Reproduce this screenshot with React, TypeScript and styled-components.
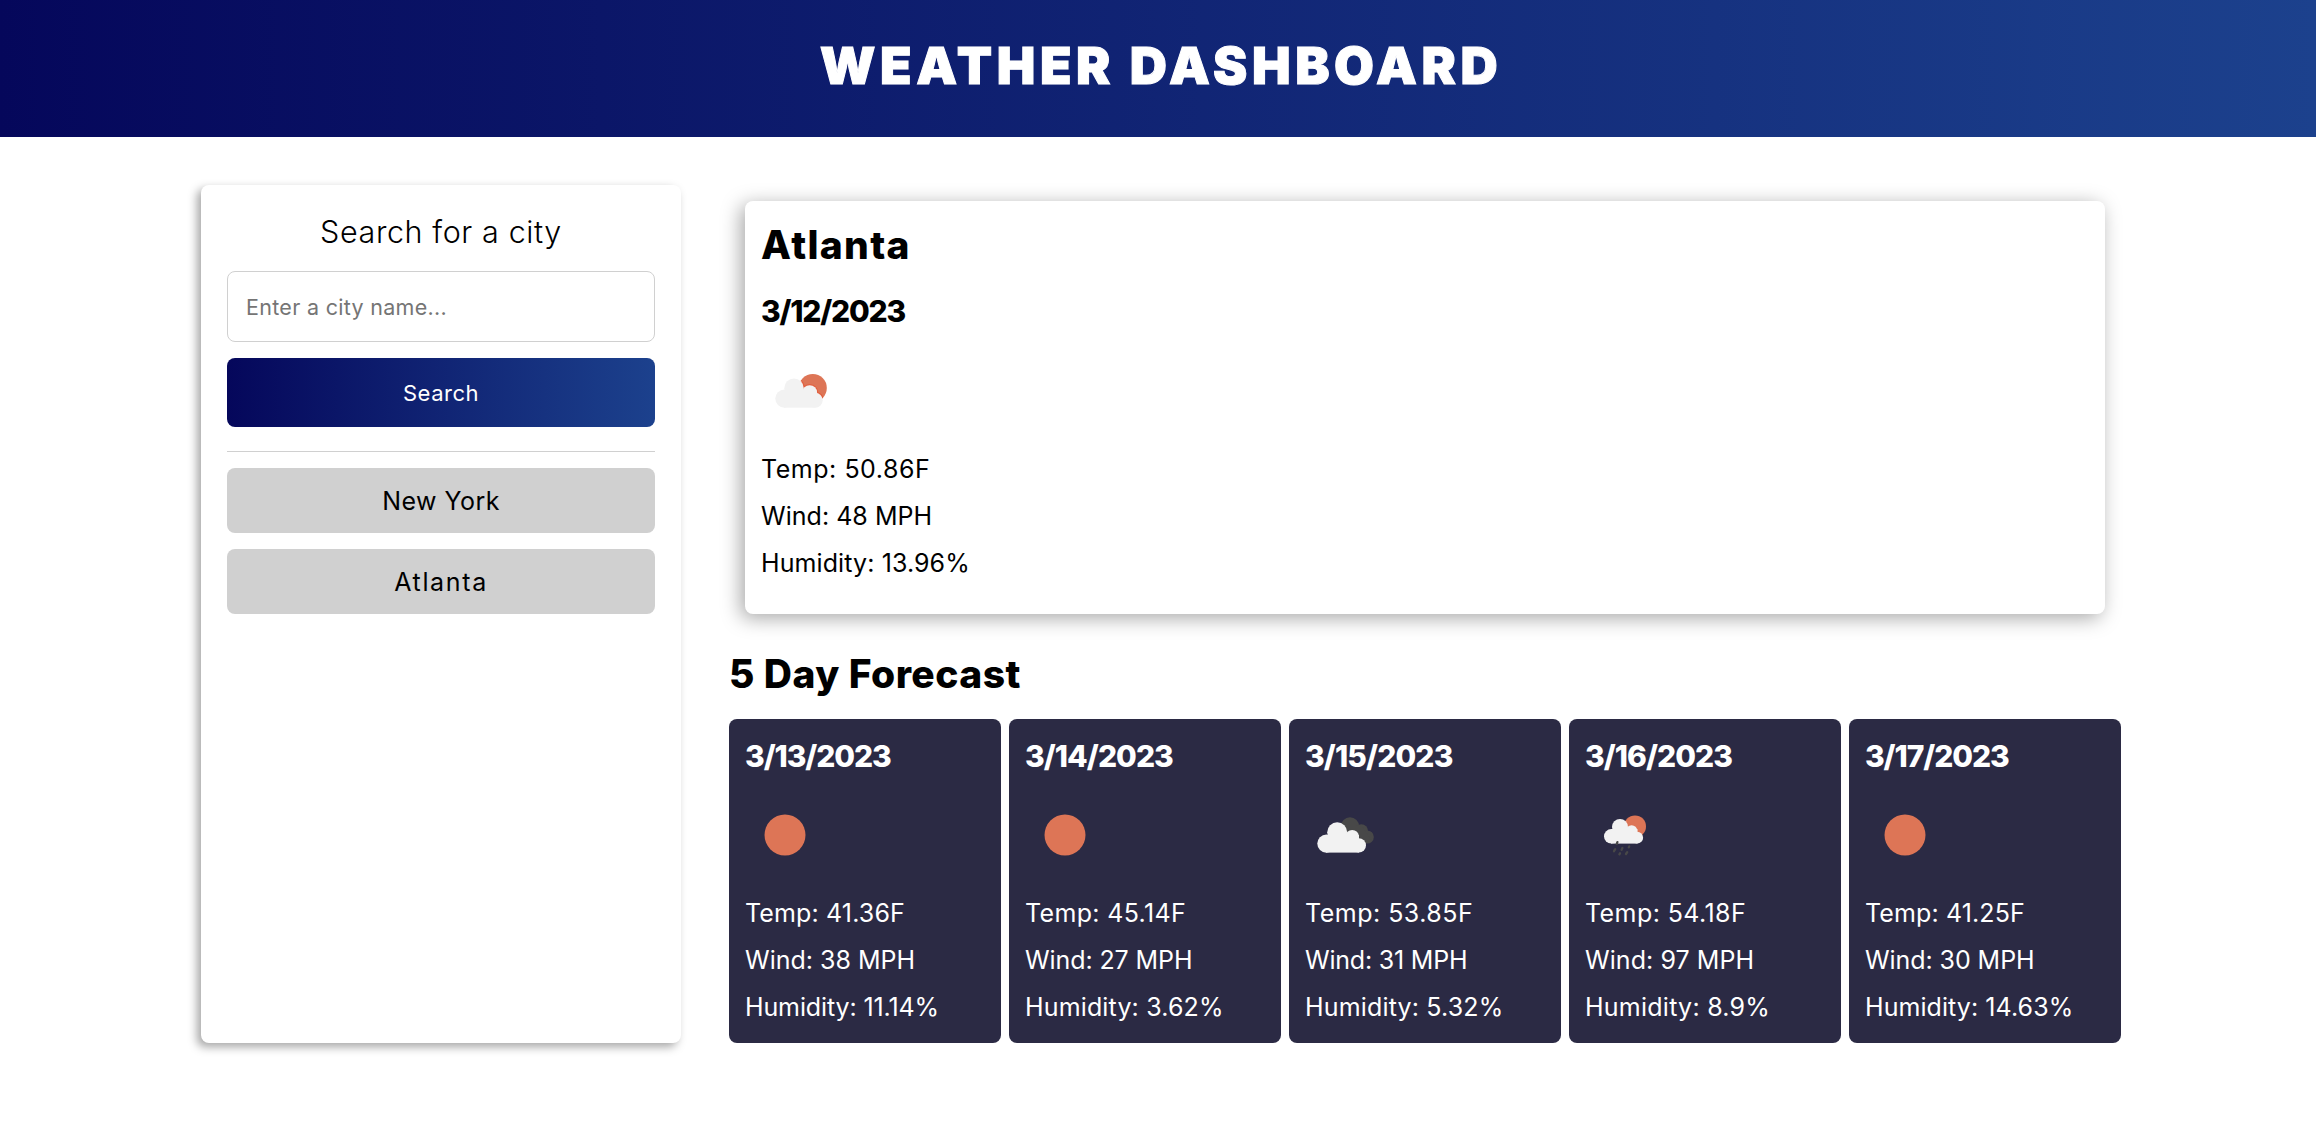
import React from "react";
import styled, { createGlobalStyle } from "styled-components";

const GlobalStyle = createGlobalStyle`
  * { box-sizing: border-box; margin: 0; padding: 0; }
  body { min-height: 1144px; background: #fff; color: #000; font-family: Inter, "Liberation Sans", sans-serif; }
`;

const Header = styled.header`
  display: flex;
  align-items: center;
  justify-content: center;
  height: 137px;
  padding: 0 0 8px 6px;
  background: linear-gradient(90deg, #05075b, #1c418d);
`;

const Title = styled.h1`
  color: #fff;
  font-size: 51.5px;
  font-weight: 900;
  line-height: 78px;
  letter-spacing: 4.55px;
  white-space: nowrap;
  -webkit-text-stroke: 1px #fff;
`;

const Layout = styled.main`
  display: flex;
  align-items: stretch;
  gap: 48px;
  width: 1920px;
  height: 858px;
  margin: 48px 0 0 201px;
`;

const Sidebar = styled.aside`
  display: flex;
  flex-direction: column;
  flex: 0 0 480px;
  padding: 23px 26px;
  border-radius: 8px;
  background: #fff;
  box-shadow: -4px 4px 10px rgba(0, 0, 0, 0.35);
`;

const SearchLabel = styled.label`
  margin-bottom: 15px;
  font-size: 30.5px;
  font-weight: 300;
  line-height: 48px;
  letter-spacing: 0.6px;
  text-align: center;
`;

const CityInput = styled.input`
  height: 71px;
  padding: 0 18px;
  border: 1px solid #d0d0d0;
  border-radius: 8px;
  background: #fff;
  font-family: inherit;
  font-size: 21.5px;
  letter-spacing: 0.3px;
  outline: none;
  &::placeholder { color: #757575; opacity: 1; }
`;

const SearchButton = styled.button`
  height: 69px;
  margin-top: 16px;
  border: 0;
  border-radius: 8px;
  background: linear-gradient(90deg, #05075b, #1c418d);
  color: #fff;
  font-family: inherit;
  font-size: 22px;
  letter-spacing: 0.5px;
`;

const Divider = styled.hr`
  height: 1px;
  margin: 24px 0 16px;
  border: 0;
  background: #d0d0d0;
`;

const History = styled.div`
  display: flex;
  flex-direction: column;
  gap: 16px;
`;

const HistoryItem = styled.button<{ $spacing: number }>`
  height: 65px;
  border: 0;
  border-radius: 8px;
  background: #d0d0d0;
  color: #000;
  font-family: inherit;
  font-size: 25px;
  letter-spacing: ${(p) => p.$spacing}px;
`;

const Content = styled.section`
  display: flex;
  flex-direction: column;
  flex: 1;
`;

const CurrentCard = styled.article`
  height: 413px;
  margin: 16px 16px 0;
  padding: 14px 16px;
  border-radius: 8px;
  background: #fff;
  box-shadow: -4px 4px 20px rgba(0, 0, 0, 0.35);
`;

const CityName = styled.h2`
  margin-bottom: 12px;
  font-size: 39px;
  font-weight: 800;
  line-height: 60px;
  letter-spacing: 1.3px;
`;

const DateHeading = styled.h3<{ $spacing: number }>`
  font-size: 30px;
  font-weight: 800;
  line-height: 48px;
  letter-spacing: ${(p) => p.$spacing - 0.45}px;
`;

const WeatherIcon = styled.svg<{ $top?: number }>`
  display: block;
  width: 80px;
  height: 80px;
  margin: ${(p) => p.$top ?? 15}px 0 19px;
`;

const Stats = styled.div`
  display: flex;
  flex-direction: column;
  gap: 8px;
`;

const Stat = styled.p<{ $spacing: number }>`
  font-size: 25px;
  line-height: 39px;
  letter-spacing: ${(p) => p.$spacing}px;
  white-space: nowrap;
`;

const ForecastHeading = styled.h2`
  margin: 30px 0 15px;
  font-size: 39px;
  font-weight: 800;
  line-height: 60px;
  letter-spacing: 0.45px;
`;

const ForecastGrid = styled.div`
  display: grid;
  grid-template-columns: repeat(5, 1fr);
  gap: 8px;
  flex: 1;
`;

const ForecastCard = styled.article`
  padding: 13px 16px 0;
  border-radius: 8px;
  background: #2b2a44;
  color: #fff;
`;

type IconKind = "fewClouds" | "sun" | "clouds" | "rain";

const SUN = "#dd7556";
const CLOUD = "#f2f2f2";
const DARK = "#484848";

const FewCloudsCloud = () => (
  <>
    <circle cx="23.4" cy="47.6" r="9.1" />
    <circle cx="33" cy="37.2" r="9.7" />
    <circle cx="48.7" cy="41.6" r="7.4" />
    <circle cx="54.2" cy="49.2" r="7.5" />
    <rect x="23" y="39" width="31.5" height="17.7" />
  </>
);

function Icon({ kind, top }: { kind: IconKind; top?: number }) {
  return (
    <WeatherIcon viewBox="0 0 80 80" $top={top}>
      {kind === "sun" && <circle cx="40" cy="40" r="20.5" fill={SUN} />}
      {kind === "fewClouds" && (
        <>
          <clipPath id="sun-disc"><circle cx="51.8" cy="37" r="14" /></clipPath>
          <circle cx="51.8" cy="37" r="14" fill={SUN} />
          <g clipPath="url(#sun-disc)" fill="#e2603f" stroke="#e2603f" strokeWidth="2.4"><FewCloudsCloud /></g>
          <g fill={CLOUD}><FewCloudsCloud /></g>
        </>
      )}
      {kind === "clouds" && (
        <>
          <g fill={DARK}>
            <circle cx="45" cy="31.5" r="9.2" />
            <circle cx="56.3" cy="36" r="6.8" />
            <circle cx="62.2" cy="42" r="6.6" />
            <path d="M45 31L57 31L67 46L58 48L45 40Z" />
          </g>
          <g fill={CLOUD}>
            <circle cx="21.4" cy="48.6" r="9.1" />
            <circle cx="32.2" cy="37.2" r="10" />
            <circle cx="47.2" cy="41.6" r="6.7" />
            <circle cx="53.8" cy="50.4" r="7.2" />
            <rect x="21" y="40" width="33" height="17.6" />
          </g>
        </>
      )}
      {kind === "rain" && (
        <>
          <circle cx="50" cy="31.4" r="11" fill={SUN} />
          <g fill={CLOUD}>
            <circle cx="26.3" cy="41.3" r="7.3" />
            <circle cx="35" cy="32" r="8" />
            <circle cx="46.6" cy="35.8" r="5.6" />
            <circle cx="52.2" cy="42.7" r="5.9" />
            <rect x="26" y="34" width="26.5" height="14.6" />
          </g>
          <g stroke={DARK} strokeWidth="2.3" strokeLinecap="round">
            <path d="M32.4 47.2L31.8 48.8M44.2 51.4L43.8 52.4M37.4 53L36.6 54.8M30.2 54.2L29 56.2M42.2 57.2L41 59M35 58.3L34.4 59.3" />
          </g>
        </>
      )}
    </WeatherIcon>
  );
}

interface Day {
  date: [string, number];
  icon: IconKind;
  temp: [string, number];
  wind: [string, number];
  humidity: [string, number];
}

const current: Day = {
  date: ["3/12/2023", -0.75],
  icon: "fewClouds",
  temp: ["50.86F", 0.53],
  wind: ["48 MPH", 0.03],
  humidity: ["13.96%", 0.1],
};

const forecast: Day[] = [
  { date: ["3/13/2023", -0.62], icon: "sun", temp: ["41.36F", 0.14], wind: ["38 MPH", 0], humidity: ["11.14%", -0.12] },
  { date: ["3/14/2023", -0.49], icon: "sun", temp: ["45.14F", 0.34], wind: ["27 MPH", -0.09], humidity: ["3.62%", 0.15] },
  { date: ["3/15/2023", -0.41], icon: "clouds", temp: ["53.85F", 0.49], wind: ["31 MPH", -0.2], humidity: ["5.32%", 0.17] },
  { date: ["3/16/2023", -0.51], icon: "rain", temp: ["54.18F", 0.42], wind: ["97 MPH", 0.07], humidity: ["8.9%", 0.25] },
  { date: ["3/17/2023", -0.63], icon: "sun", temp: ["41.25F", 0.12], wind: ["30 MPH", -0.07], humidity: ["14.63%", 0.07] },
];

function DayDetails({ day, iconTop }: { day: Day; iconTop?: number }) {
  return (
    <>
      <DateHeading $spacing={day.date[1]}>{day.date[0]}</DateHeading>
      <Icon kind={day.icon} top={iconTop} />
      <Stats>
        <Stat $spacing={day.temp[1]}>{`Temp: ${day.temp[0]}`}</Stat>
        <Stat $spacing={day.wind[1]}>{`Wind: ${day.wind[0]}`}</Stat>
        <Stat $spacing={day.humidity[1]}>{`Humidity: ${day.humidity[0]}`}</Stat>
      </Stats>
    </>
  );
}

export default function App() {
  return (
    <>
      <GlobalStyle />
      <Header>
        <Title>WEATHER DASHBOARD</Title>
      </Header>
      <Layout>
        <Sidebar>
          <SearchLabel htmlFor="city">Search for a city</SearchLabel>
          <CityInput id="city" placeholder="Enter a city name..." />
          <SearchButton>Search</SearchButton>
          <Divider />
          <History>
            <HistoryItem $spacing={0.46}>New York</HistoryItem>
            <HistoryItem $spacing={1.65}>Atlanta</HistoryItem>
          </History>
        </Sidebar>
        <Content>
          <CurrentCard>
            <CityName>Atlanta</CityName>
            <DayDetails day={current} iconTop={16} />
          </CurrentCard>
          <ForecastHeading>5 Day Forecast</ForecastHeading>
          <ForecastGrid>
            {forecast.map((day) => (
              <ForecastCard key={day.date[0]}>
                <DayDetails day={day} />
              </ForecastCard>
            ))}
          </ForecastGrid>
        </Content>
      </Layout>
    </>
  );
}
